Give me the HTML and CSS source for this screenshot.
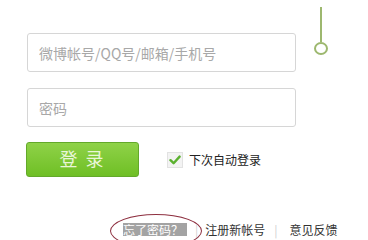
FILE: index.html
```html
<!DOCTYPE html>
<html lang="zh-CN">
<head>
<meta charset="utf-8">
<title>登录</title>
<link rel="stylesheet" href="styles.css">
</head>
<body>
<div class="main">
  <div class="top">
    <div class="form">
      <input class="field" type="text" placeholder="微博帐号/QQ号/邮箱/手机号">
      <input class="field field-pass" type="text" placeholder="密码">
      <div class="actions">
        <button class="login" type="button">登 录</button>
        <label class="remember"><span class="check"><svg width="12" height="10" viewBox="0 0 12 10"><path d="M1.5 5.2 L4.6 8.2 L10.6 1.6" fill="none" stroke="#5bb12f" stroke-width="2.4" stroke-linecap="round" stroke-linejoin="round"/></svg></span>下次自动登录</label>
      </div>
    </div>
    <div class="slider">
      <span class="slider-line"></span>
      <span class="slider-knob"></span>
    </div>
  </div>
  <div class="links">
    <span class="forgot-wrap"><span class="forgot">忘了密码？</span><span class="ellipse"></span></span>
    <span class="sep">|</span>
    <span class="link">注册新帐号</span>
    <span class="sep sep2">|</span>
    <span class="link">意见反馈</span>
  </div>
</div>
</body>
</html>
```
FILE: styles.css
```css
html, body {
  margin: 0;
  padding: 0;
  background: #ffffff;
}
body {
  width: 368px;
  height: 240px;
  overflow: hidden;
  font-family: "Noto Sans CJK SC", "Noto Sans", sans-serif;
  color: #333333;
}
.main {
  padding-left: 26px;
}
.top {
  display: flex;
  align-items: flex-start;
  padding-top: 7px;
}
.form {
  margin-top: 26px;
  width: 270px;
  display: flex;
  flex-direction: column;
}
.field {
  box-sizing: border-box;
  width: 269px;
  height: 39px;
  margin: 0 0 0 1px;
  padding: 0 0 0 11px;
  border: 1px solid #d6d6d6;
  border-radius: 3px;
  font-family: "Noto Sans CJK SC", sans-serif;
  font-size: 14px;
  color: #333333;
  background: #ffffff;
  outline: none;
}
.field::placeholder {
  color: #a8a8a8;
}
.field-pass {
  margin-top: 16px;
}
.actions {
  display: flex;
  align-items: center;
  margin-top: 15px;
}
.login {
  box-sizing: border-box;
  width: 113px;
  height: 35px;
  margin: 0;
  padding: 0 0 2px 0;
  border: 1px solid #63a92a;
  border-radius: 3px;
  background: linear-gradient(#8fd248, #6fbf25);
  color: #e9f6d8;
  font-family: "Noto Sans CJK SC", sans-serif;
  font-size: 18px;
  letter-spacing: 2px;
  line-height: 31px;
}
.remember {
  display: flex;
  align-items: center;
  margin-left: 28px;
  font-size: 12px;
  line-height: 16px;
  color: #222222;
}
.check {
  box-sizing: border-box;
  width: 16px;
  height: 16px;
  margin-right: 6px;
  border: 1px solid #e2e2e2;
  background: #f3f3f3;
  display: flex;
  align-items: center;
  justify-content: center;
}
.slider {
  display: flex;
  flex-direction: column;
  align-items: center;
  margin-left: 18px;
  width: 14px;
}
.slider-line {
  width: 2px;
  height: 35px;
  background: #9db86f;
}
.slider-knob {
  box-sizing: border-box;
  width: 14px;
  height: 13px;
  border: 2px solid #9db86f;
  border-radius: 50%;
}
.links {
  display: flex;
  align-items: center;
  margin-top: 45px;
  padding-left: 97px;
  font-size: 12px;
  line-height: 16px;
}
.forgot-wrap {
  position: relative;
}
.forgot {
  display: inline-block;
  background: #a3a3a3;
  color: #ffffff;
  padding: 0 4px 0 0;
  line-height: 13px;
}
.ellipse {
  position: absolute;
  left: -13px;
  top: -8px;
  width: 90px;
  height: 32px;
  border: 1px solid #8e3040;
  border-radius: 50%;
}
.sep {
  color: #d0d0d0;
  margin: 0 7px 0 8px;
}
.sep2 {
  margin: 0 12px 0 9px;
}
.link {
  color: #333333;
}
```
